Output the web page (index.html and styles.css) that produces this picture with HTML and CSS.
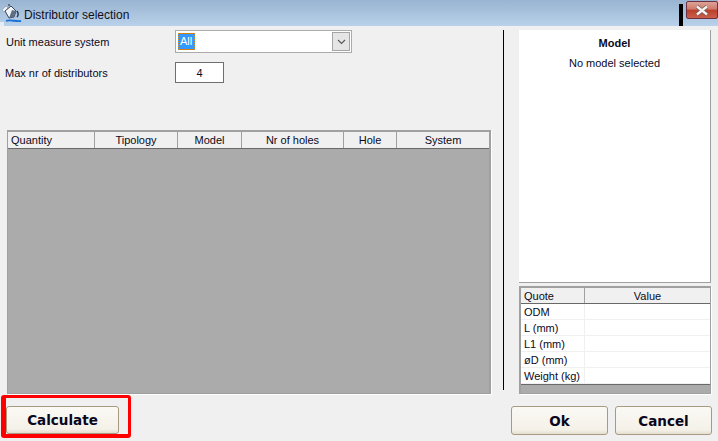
FILE: index.html
```
<!DOCTYPE html>
<html lang="en">
<head>
<meta charset="utf-8">
<title>Distributor selection</title>
<link rel="stylesheet" href="styles.css">
</head>
<body>
<div class="window">
  <header class="titlebar">
    <svg class="app-icon" width="20" height="20" viewBox="0 0 20 20">
      <path d="M0 6 L4 2 L6 4 L2 8 Z" fill="#eef2f6" stroke="#8a96a3" stroke-width=".6"/>
      <path d="M3 7 L9 2 L14 7 L12 13 L7 14 Z" fill="#f2f5f8" stroke="#38465a" stroke-width="1"/>
      <path d="M7 14 L12 13 L14 7 L10 6 Z" fill="#5f7086"/>
      <path d="M15 7 C17 10 16 12 15 13" stroke="#27364a" stroke-width="1.4" fill="none"/>
      <path d="M4 17 C8 15 14 18 19 17" stroke="#1a6ed8" stroke-width="1.8" fill="none"/>
      <circle cx="7" cy="1" r="1" fill="#555"/>
    </svg>
    <span class="title">Distributor selection</span>
    <span class="title-mark"></span>
    <button class="close" type="button" aria-label="Close">
      <svg width="14" height="11" viewBox="0 0 14 11"><path d="M2 1.5 L12 9.5 M12 1.5 L2 9.5" stroke="#6b5a58" stroke-width="3.8" fill="none"/><path d="M2 1.5 L12 9.5 M12 1.5 L2 9.5" stroke="#f6f3f1" stroke-width="2.4" fill="none"/></svg>
    </button>
  </header>
  <main class="body">
    <section class="left">
      <div class="form-row first">
        <label class="label">Unit measure system</label>
        <div class="combo">
          <span class="combo-value">All</span>
          <span class="combo-arrow"><svg width="9" height="6" viewBox="0 0 9 6"><path d="M1 1 L4.5 4.5 L8 1" stroke="#555" stroke-width="1.1" fill="none"/></svg></span>
        </div>
      </div>
      <div class="form-row second">
        <label class="label narrow">Max nr of distributors</label>
        <div class="spin">4</div>
      </div>
      <div class="grid main-grid">
        <div class="grid-head">
          <span class="col c1 start">Quantity</span>
          <span class="col c2">Tipology</span>
          <span class="col c3">Model</span>
          <span class="col c4">Nr of holes</span>
          <span class="col c5">Hole</span>
          <span class="col c6">System</span>
        </div>
        <div class="grid-empty"></div>
      </div>
    </section>
    <div class="divider"></div>
    <aside class="right">
      <div class="model-panel">
        <div class="model-title">Model</div>
        <div class="model-text">No model selected</div>
      </div>
      <div class="grid quote-grid">
        <div class="quote-head">
          <span class="q1 start">Quote</span>
          <span class="q2">Value</span>
        </div>
        <div class="quote-row"><span class="q1">ODM</span><span class="q2"></span></div>
        <div class="quote-row"><span class="q1">L (mm)</span><span class="q2"></span></div>
        <div class="quote-row"><span class="q1">L1 (mm)</span><span class="q2"></span></div>
        <div class="quote-row"><span class="q1">øD (mm)</span><span class="q2"></span></div>
        <div class="quote-row"><span class="q1">Weight (kg)</span><span class="q2"></span></div>
        <div class="quote-empty"></div>
      </div>
    </aside>
  </main>
  <footer class="footer">
    <div class="highlight"><button class="btn calc" type="button">Calculate</button></div>
    <div class="actions">
      <button class="btn action" type="button">Ok</button>
      <button class="btn action" type="button">Cancel</button>
    </div>
  </footer>
</div>
</body>
</html>
```
FILE: styles.css
```
* { box-sizing: border-box; }
html, body { margin: 0; padding: 0; }
body {
  width: 718px; height: 441px; overflow: hidden;
  background: #f0f0f0;
  font-family: "Liberation Sans", Arial, sans-serif;
  font-size: 11px; color: #0a0a1e;
}
.window { width: 718px; height: 441px; display: flex; flex-direction: column; }
.titlebar {
  height: 26px; flex: none; display: flex; align-items: flex-start;
  background: linear-gradient(#e4ecf5, #e4ecf5) 0 100% / 4px 4px no-repeat, linear-gradient(#99b4d1, #b9d1ea);
}
.app-icon { margin: 4px 2px 0 2px; flex: none; }
.title { margin: 7px 0 0 0; font-size: 12px; line-height: 16px; color: #10101c; }
.title-mark { margin: 4px 0 0 auto; width: 4px; height: 22px; background: #000; }
.close {
  width: 32px; height: 18px; margin: 1px 0 0 3px; padding: 0; border: 1px solid #6e3040; border-radius: 2px;
  background: linear-gradient(#dba498 0, #d0796a 45%, #b93f2b 50%, #c9604c 100%);
  display: flex; align-items: center; justify-content: center;
}
.body { height: 368px; flex: none; display: flex; padding-top: 4px; }
.left { width: 503px; flex: none; display: flex; flex-direction: column; }
.form-row { display: flex; align-items: center; }
.first { height: 23px; }
.second { height: 21px; margin-top: 9px; }
.label { width: 175px; padding-left: 6px; flex: none; }
.narrow { padding-left: 5px; }
.combo {
  width: 177px; height: 23px; background: #fff; border: 1px solid #ababab; display: flex; align-items: center;
  padding: 2px 1px 2px 2px; justify-content: space-between;
}
.combo-value { background: #3399ff; color: #fff; height: 17px; line-height: 17px; padding: 0 2px; width: 17px; outline: 1px dotted #d8861a; outline-offset: -1px; }
.combo-arrow { width: 18px; height: 19px; background: #e5e5e5; border: 1px solid #a5a5a5; display: flex; align-items: center; justify-content: center; }
.spin { width: 49px; height: 21px; background: #fff; border: 1px solid #6f6f6f; text-align: center; line-height: 20px; }
.grid { border: 1px solid #a0a0a0; background: #ababab; }
.main-grid { width: 484px; height: 264px; margin: 47px 0 0 7px; border-top: 2px solid #a0a0a0; border-right: 2px solid #a0a0a0; box-shadow: 1px 1px 0 #fff; }
.grid-head { display: flex; height: 17px; background: #f0f0f0; border-bottom: 1px solid #696969; }
.col { border-right: 1px solid #a0a0a0; text-align: center; line-height: 17px; flex: none; }
.start { text-align: left; padding-left: 3px; }
.c1 { width: 87px; } .c2 { width: 83px; } .c3 { width: 64px; } .c4 { width: 102px; } .c5 { width: 53px; }
.c6 { width: 92px; border-right: 0; }
.grid-empty { height: 246px; }
.divider { width: 1px; height: 360px; flex: none; background: #000; }
.right { width: 192px; flex: none; margin-left: 15px; display: flex; flex-direction: column; }
.model-panel { height: 253px; background: #fff; border-right: 1px solid #a0a0a0; border-bottom: 1px solid #a0a0a0; text-align: center; padding-top: 6px; }
.model-title { font-weight: 700; line-height: 15px; }
.model-text { margin-top: 5px; line-height: 15px; }
.quote-grid { margin-top: 3px; height: 108px; border-top: 2px solid #a0a0a0; border-left: 2px solid #a0a0a0; border-right: 1px solid #a0a0a0; box-shadow: 1px 1px 0 #fff; }
.quote-head { display: flex; height: 16px; background: #f0f0f0; border-bottom: 1px solid #696969; line-height: 16px; }
.quote-head .q1 { border-right: 1px solid #a0a0a0; }
.quote-row { display: flex; height: 16px; background: #fff; border-bottom: 1px solid #f0f0f0; line-height: 16px; }
.q1 { width: 64px; flex: none; padding-left: 3px; border-right: 1px solid #f0f0f0; }
.q2 { flex: 1; text-align: center; }
.quote-empty { height: 8px; border-top: 1px solid #696969; }
.footer { height: 47px; flex: none; display: flex; justify-content: space-between; align-items: flex-start; padding: 1px 0 0 1px; }
.highlight { width: 130px; height: 43px; border: 4px solid #ff0000; border-left-width: 5px; border-top-width: 3px; border-right-width: 3px; border-radius: 3px; padding-top: 8px; }
.btn {
  height: 28px; padding: 0; border: 1px solid #a89a82; border-radius: 3px;
  background: linear-gradient(#fbf9f4, #f4f1e8 85%, #e4dfd0);
  font-family: "DejaVu Sans", sans-serif; font-weight: 700; font-size: 13.5px; color: #07071e;
}
.calc { width: 113px; }
.actions { display: flex; gap: 7px; padding: 11px 6px 0 0; }
.action { width: 97px; height: 29px; }
```
